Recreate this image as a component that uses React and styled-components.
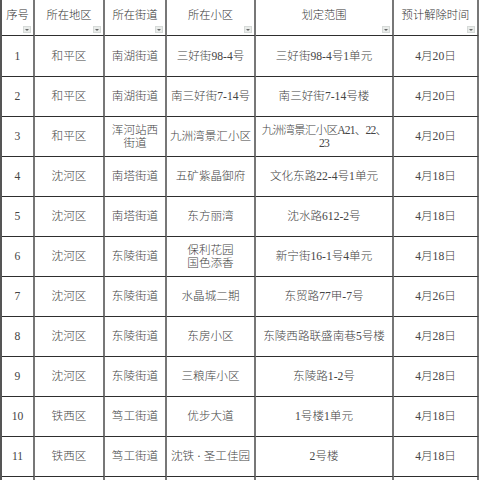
import React from "react";
import styled, { createGlobalStyle } from "styled-components";

const GlobalStyle = createGlobalStyle`
  html, body {
    margin: 0;
    padding: 0;
    background: #ffffff;
  }
  body {
    width: 480px;
    height: 480px;
    overflow: hidden;
    font-family: "Liberation Serif", "Noto Sans CJK SC", serif;
  }
`;

const Sheet = styled.div`
  display: grid;
  grid-template-columns: 33px 70px 62px 89px 138px 85px;
  grid-template-rows: 36px 41px repeat(11, 40px);
  width: 479px;
  height: 480px;
  overflow: hidden;
  border-left: 2px solid #555;
  box-sizing: border-box;
`;

const Cell = styled.div`
  position: relative;
  display: flex;
  align-items: center;
  justify-content: center;
  box-sizing: border-box;
  border-right: 2px solid #777;
  border-bottom: 1px solid #2e2e2e;
  font-size: 11.6px;
  font-weight: 300;
  line-height: 13px;
  letter-spacing: ${(p) => (p.$tight ? "-0.8px" : "0")};
  color: #444;
  text-align: center;
  white-space: pre;
`;

const HeadCell = styled(Cell)`
  padding-bottom: 5px;
  font-size: 11.3px;
  color: #333;
`;

const FilterButton = styled.span`
  position: absolute;
  right: 2px;
  bottom: 2px;
  width: 8px;
  height: 7px;
  background: #e9ecea;
  border: 1px solid #d6dad8;
  box-sizing: border-box;
  display: flex;
  align-items: center;
  justify-content: center;

  &::after {
    content: "";
    border-left: 2px solid transparent;
    border-right: 2px solid transparent;
    border-top: 2px solid #666;
  }
`;

const headers = ["序号", "所在地区", "所在街道", "所在小区", "划定范围", "预计解除时间"];

const rows = [
  ["1", "和平区", "南湖街道", "三好街98-4号", "三好街98-4号1单元", "4月20日"],
  ["2", "和平区", "南湖街道", "南三好街7-14号", "南三好街7-14号楼", "4月20日"],
  ["3", "和平区", "浑河站西\n街道", "九洲湾景汇小区", "九洲湾景汇小区A21、22、\n23", "4月20日"],
  ["4", "沈河区", "南塔街道", "五矿紫晶御府", "文化东路22-4号1单元", "4月18日"],
  ["5", "沈河区", "南塔街道", "东方丽湾", "沈水路612-2号", "4月18日"],
  ["6", "沈河区", "东陵街道", "保利花园\n国色添香", "新宁街16-1号4单元", "4月18日"],
  ["7", "沈河区", "东陵街道", "水晶城二期", "东贸路77甲-7号", "4月26日"],
  ["8", "沈河区", "东陵街道", "东房小区", "东陵西路联盛南巷5号楼", "4月28日"],
  ["9", "沈河区", "东陵街道", "三粮库小区", "东陵路1-2号", "4月28日"],
  ["10", "铁西区", "笃工街道", "优步大道", "1号楼1单元", "4月18日"],
  ["11", "铁西区", "笃工街道", "沈铁 · 圣工佳园", "2号楼", "4月18日"],
  ["", "", "", "", "", ""],
];

export default function App() {
  return (
    <>
      <GlobalStyle />
      <Sheet>
        {headers.map((h) => (
          <HeadCell key={h}>
            {h}
            <FilterButton />
          </HeadCell>
        ))}
        {rows.map((row, i) =>
          row.map((text, j) => (
            <Cell key={`${i}-${j}`} $tight={text.includes("、")}>
              {text}
            </Cell>
          ))
        )}
      </Sheet>
    </>
  );
}
